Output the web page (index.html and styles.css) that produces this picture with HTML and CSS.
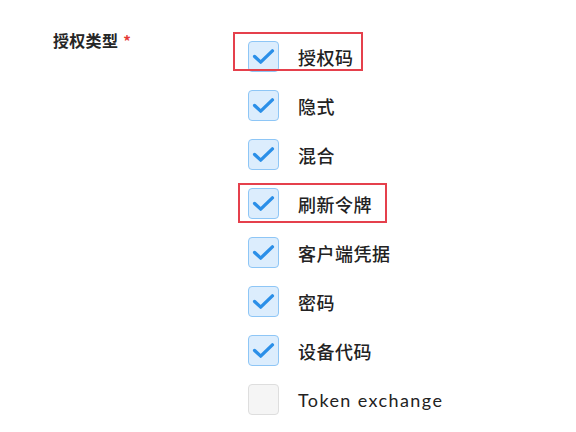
FILE: index.html
```html
<!DOCTYPE html>
<html lang="zh">
<head>
<meta charset="utf-8">
<link rel="stylesheet" href="styles.css">
</head>
<body>
<div class="form-row">
  <div class="label">授权类型<span class="req">*</span></div>
  <div class="options">
    <div class="option"><span class="box checked"><svg viewBox="0 0 31 31"><polyline points="6,15.5 12.5,21.5 25,9.5"/></svg></span><span class="text">授权码</span></div>
    <div class="option"><span class="box checked"><svg viewBox="0 0 31 31"><polyline points="6,15.5 12.5,21.5 25,9.5"/></svg></span><span class="text">隐式</span></div>
    <div class="option"><span class="box checked"><svg viewBox="0 0 31 31"><polyline points="6,15.5 12.5,21.5 25,9.5"/></svg></span><span class="text">混合</span></div>
    <div class="option"><span class="box checked"><svg viewBox="0 0 31 31"><polyline points="6,15.5 12.5,21.5 25,9.5"/></svg></span><span class="text">刷新令牌</span></div>
    <div class="option"><span class="box checked"><svg viewBox="0 0 31 31"><polyline points="6,15.5 12.5,21.5 25,9.5"/></svg></span><span class="text">客户端凭据</span></div>
    <div class="option"><span class="box checked"><svg viewBox="0 0 31 31"><polyline points="6,15.5 12.5,21.5 25,9.5"/></svg></span><span class="text">密码</span></div>
    <div class="option"><span class="box checked"><svg viewBox="0 0 31 31"><polyline points="6,15.5 12.5,21.5 25,9.5"/></svg></span><span class="text">设备代码</span></div>
    <div class="option"><span class="box"></span><span class="text latin">Token exchange</span></div>
  </div>
</div>
<div class="mark mark-1"></div>
<div class="mark mark-2"></div>
</body>
</html>
```
FILE: styles.css
```css
html, body {
  margin: 0;
  padding: 0;
  background: #ffffff;
}
body {
  width: 576px;
  height: 432px;
  position: relative;
  overflow: hidden;
  font-family: "Lato", "Noto Sans CJK SC", sans-serif;
  color: #222222;
}
.form-row {
  display: flex;
  padding: 29px 0 0 53px;
}
.label {
  width: 195px;
  flex: none;
  font-family: "Noto Sans CJK SC", sans-serif;
  font-size: 16px;
  font-weight: 700;
  line-height: 22px;
  color: #262626;
  letter-spacing: 0.3px;
}
.req {
  color: #e53935;
  margin-left: 5px;
  font-size: 15px;
}
.options {
  display: flex;
  flex-direction: column;
  gap: 18px;
  padding-top: 12px;
}
.option {
  display: flex;
  align-items: center;
  height: 31px;
  gap: 19px;
}
.box {
  width: 31px;
  height: 31px;
  box-sizing: border-box;
  border: 1.5px solid #dedede;
  background: #f5f5f5;
  border-radius: 4px;
  flex: none;
  display: flex;
}
.box.checked {
  background: #dcedfd;
  border-color: #8ec6f6;
}
.box svg {
  width: 100%;
  height: 100%;
}
.box polyline {
  fill: none;
  stroke: #2b8fe8;
  stroke-width: 3.6;
  stroke-linecap: round;
  stroke-linejoin: round;
}
.text {
  font-family: "Noto Sans CJK SC", sans-serif;
  font-size: 18px;
  font-weight: 500;
  line-height: 24px;
  color: #222222;
  letter-spacing: 0.5px;
}
.text.latin {
  font-family: "Lato", sans-serif;
  font-weight: 400;
  letter-spacing: 1.4px;
}
.mark {
  position: absolute;
  border: 2px solid #e5404c;
  box-sizing: border-box;
}
.mark-1 {
  left: 233px;
  top: 32px;
  width: 130px;
  height: 39px;
}
.mark-2 {
  left: 238px;
  top: 183px;
  width: 149px;
  height: 40px;
}
```
